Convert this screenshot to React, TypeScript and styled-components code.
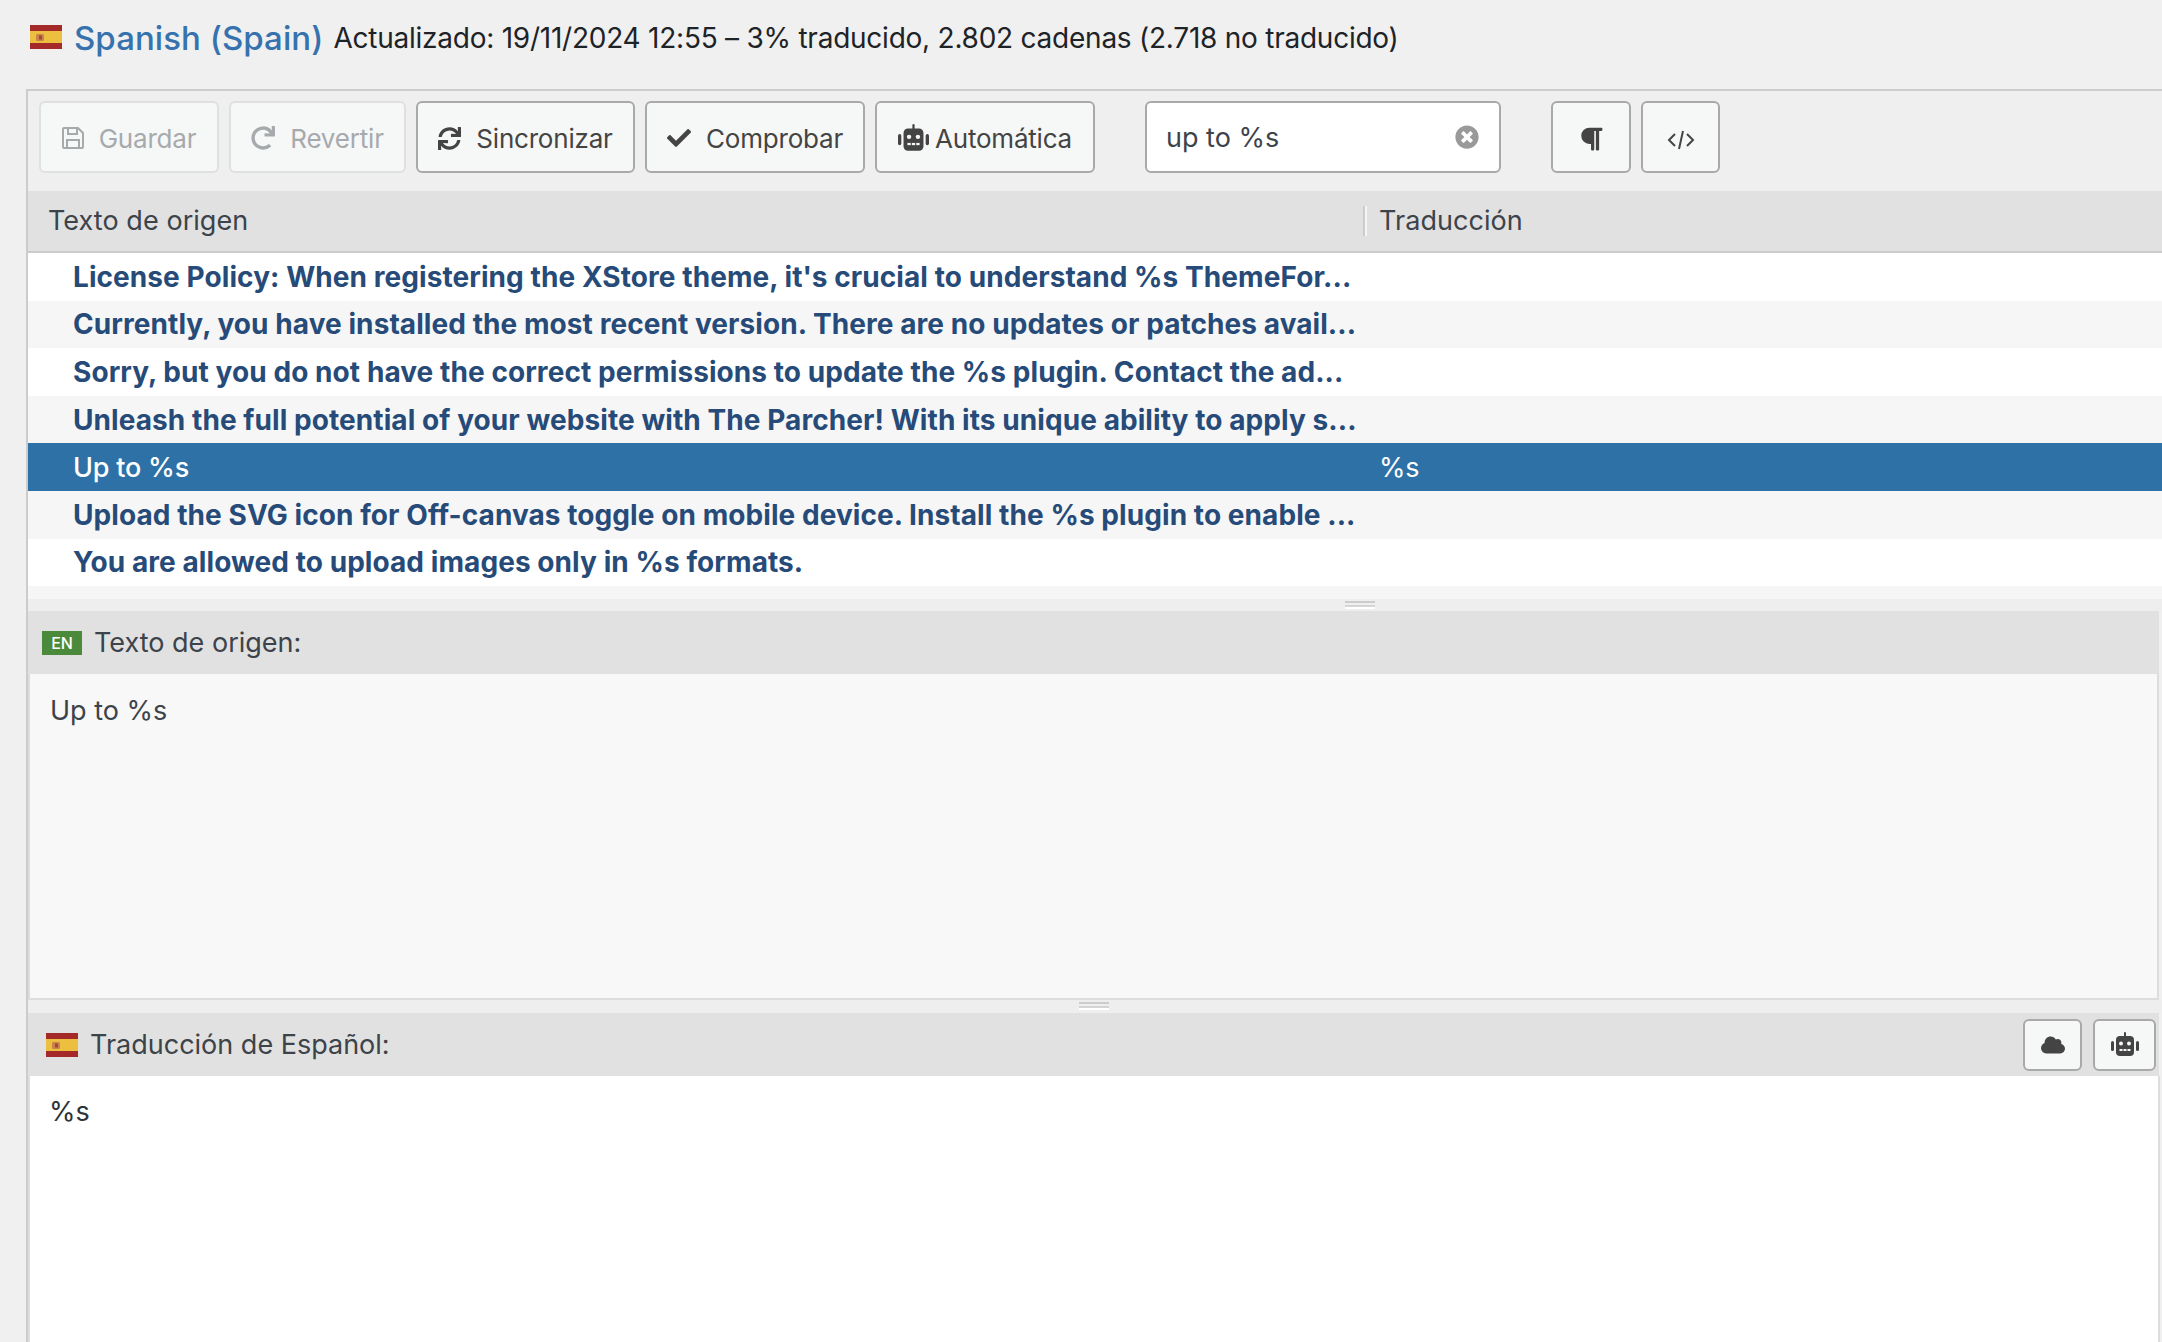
import { ReactNode } from 'react';
import styled, { createGlobalStyle } from 'styled-components';
import { FaCheck, FaCloud, FaParagraph, FaRedo, FaSync, FaTimesCircle } from 'react-icons/fa';

const GlobalStyle = createGlobalStyle`
  html, body {
    margin: 0;
    padding: 0;
    background: #f0f0f0;
  }
  body {
    font-family: Inter, "Noto Sans", "Liberation Sans", sans-serif;
    color: #3c434a;
    overflow: hidden;
  }
`;

const Page = styled.div`
  width: 2162px;
  height: 1342px;
  overflow: hidden;
  display: flex;
  flex-direction: column;
`;

const TitleBar = styled.div`
  height: 89px;
  flex: none;
  box-sizing: border-box;
  padding: 17px 0 0 30px;
  display: flex;
  align-items: flex-start;
`;

const TitleFlag = styled.span`
  margin-top: 8px;
  display: flex;
`;

const Locale = styled.span`
  margin-left: 12px;
  font-size: 33px;
  line-height: 42px;
  font-weight: 500;
  color: #3672ae;
  letter-spacing: 0.05px;
`;

const Stats = styled.span`
  margin-left: 10px;
  font-size: 28px;
  line-height: 42px;
  color: #1d2327;
  letter-spacing: -0.24px;
`;

const Panel = styled.div`
  margin-left: 26px;
  flex: 1;
  min-height: 0;
  border-top: 2px solid #ccc;
  border-left: 2px solid #ccc;
  display: flex;
  flex-direction: column;
`;

const Toolbar = styled.div`
  height: 100px;
  flex: none;
  box-sizing: border-box;
  padding: 10px 0 0 11px;
  display: flex;
  align-items: flex-start;
  gap: 10px;
  background: #efefef;
`;

const Button = styled.div<{ $width: number; $disabled?: boolean; $gap?: number; $drop?: number }>`
  width: ${({ $width }) => $width}px;
  height: 72px;
  flex: none;
  box-sizing: border-box;
  border: 2px solid ${({ $disabled }) => ($disabled ? '#dfe0e0' : '#a9a9a9')};
  border-radius: 6px;
  background: #f6f7f7;
  color: ${({ $disabled }) => ($disabled ? '#a7aaad' : '#444')};
  padding-top: ${({ $drop }) => $drop ?? 2}px;
  display: flex;
  align-items: center;
  justify-content: center;
  gap: ${({ $gap }) => $gap ?? 15}px;
  font-size: 26px;
  letter-spacing: -0.2px;
`;

const SearchBox = styled.div`
  width: 356px;
  height: 72px;
  margin-left: 40px;
  margin-right: 40px;
  flex: none;
  box-sizing: border-box;
  border: 2px solid #a9a9a9;
  border-radius: 6px;
  background: #fff;
  padding: 0 20px 0 19px;
  display: flex;
  align-items: center;
  justify-content: space-between;
  font-size: 27px;
  letter-spacing: 0;
  color: #3c434a;
  svg {
    color: #999;
  }
`;

const ColumnHead = styled.div`
  height: 62px;
  flex: none;
  box-sizing: border-box;
  background: #e1e1e1;
  border-bottom: 2px solid #ccc;
  padding-bottom: 1px;
  display: flex;
  align-items: center;
  font-size: 27px;
  letter-spacing: 0.05px;
  color: #3c434a;
`;

const SourceHead = styled.div`
  width: 1335px;
  flex: none;
  box-sizing: border-box;
  padding-left: 20px;
`;

const ColumnRule = styled.div`
  width: 4px;
  height: 30px;
  flex: none;
  border-left: 2px solid #ccc;
  background: #f5f5f5;
  box-sizing: border-box;
`;

const TargetHead = styled.div`
  margin-left: 12px;
`;

const List = styled.div`
  height: 346px;
  flex: none;
  overflow: hidden;
  background: #fff;
`;

const Row = styled.div<{ $selected?: boolean; $odd?: boolean }>`
  height: 47.6px;
  display: flex;
  align-items: center;
  font-size: ${({ $selected }) => ($selected ? 27 : 28)}px;
  letter-spacing: ${({ $selected }) => ($selected ? -0.2 : 0.07)}px;
  white-space: nowrap;
  background: ${({ $selected, $odd }) => ($selected ? '#2e71a6' : $odd ? '#f6f6f6' : '#fff')};
  color: ${({ $selected }) => ($selected ? '#fff' : '#274b79')};
  font-weight: ${({ $selected }) => ($selected ? 500 : 650)};
`;

const SourceCell = styled.div`
  width: 1351px;
  flex: none;
  box-sizing: border-box;
  padding-left: 45px;
  overflow: hidden;
`;

const TargetCell = styled.div`
  font-weight: 400;
`;

const Splitter = styled.div<{ $height: number; $handleLeft: number }>`
  height: ${({ $height }) => $height}px;
  flex: none;
  background: #eee;
  box-sizing: border-box;
  padding: 2px 0 0 ${({ $handleLeft }) => $handleLeft}px;
`;

const Handle = styled.div`
  width: 30px;
  height: 6px;
  box-sizing: border-box;
  border-top: 2px solid #ccc;
  border-bottom: 2px solid #d4d4d4;
  box-shadow: 0 2px 0 #fff;
`;

const PaneHead = styled.div`
  width: 2131px;
  height: 63px;
  flex: none;
  box-sizing: border-box;
  background: #e1e1e1;
  display: flex;
  align-items: center;
  font-size: 27px;
  letter-spacing: 0;
  color: #3c434a;
`;

const SourceLabel = styled.span`
  margin-left: 14px;
  display: flex;
  align-items: center;
  gap: 12px;
`;

const LangBadge = styled.span`
  width: 40px;
  height: 24px;
  background: #4a8a3a;
  color: #fff;
  font-size: 16px;
  font-weight: 500;
  display: flex;
  align-items: center;
  justify-content: center;
`;

const TargetLabel = styled.span`
  margin-left: 18px;
  display: flex;
  align-items: center;
  gap: 12px;
`;

const PaneTools = styled.div`
  margin-left: auto;
  margin-right: 3px;
  display: flex;
  gap: 11px;
`;

const SmallButton = styled.div<{ $width: number }>`
  width: ${({ $width }) => $width}px;
  height: 52px;
  box-sizing: border-box;
  border: 2px solid #a9a9a9;
  border-radius: 6px;
  background: #f6f7f7;
  color: #444;
  display: flex;
  align-items: center;
  justify-content: center;
`;

const SourceText = styled.div`
  width: 2131px;
  height: 326px;
  flex: none;
  box-sizing: border-box;
  background: #f8f8f8;
  border: 2px solid #ddd;
  border-top: 0;
  padding: 20px 20px;
  font-size: 27px;
  line-height: 34px;
  color: #3c434a;
`;

const TargetText = styled.div`
  width: 2132px;
  flex: 1;
  box-sizing: border-box;
  background: #fff;
  border: 2px solid #ddd;
  border-top: 0;
  border-bottom: 0;
  padding: 19px 19px;
  font-size: 27px;
  line-height: 34px;
  color: #2c3338;
`;

const SpainFlag = () => (
  <svg width="32" height="24" viewBox="0 0 32 24">
    <rect width="32" height="24" fill="#a32a28" />
    <rect y="6" width="32" height="12" fill="#edbf3e" />
    <rect x="6" y="9" width="8" height="7" rx="1.5" fill="#c9824a" />
    <rect x="9" y="10.5" width="3" height="4" fill="#a84440" />
  </svg>
);

const SaveIcon = () => (
  <svg width="22" height="22" viewBox="0 0 22 22" fill="none" stroke="currentColor" strokeWidth="2">
    <path d="M1 2a1 1 0 0 1 1-1h14l5 5v14a1 1 0 0 1-1 1H2a1 1 0 0 1-1-1z" />
    <path d="M6 1v6h9V1M5 21v-8h12v8" />
  </svg>
);

const Robot = ({ size }: { size: number }) => (
  <svg width={size} height={size} viewBox="0 0 28 28" fill="currentColor">
    <rect x="13" y="1" width="2" height="5" rx="1" />
    <rect x="5" y="5" width="18" height="20" rx="4" />
    <rect x="0" y="10" width="3" height="10" rx="1.5" />
    <rect x="25" y="10" width="3" height="10" rx="1.5" />
    <circle cx="10" cy="12.5" r="2" fill="#f6f7f7" />
    <circle cx="18" cy="12.5" r="2" fill="#f6f7f7" />
    <rect x="8.5" y="18" width="3" height="2" fill="#f6f7f7" />
    <rect x="12.5" y="18" width="3" height="2" fill="#f6f7f7" />
    <rect x="16.5" y="18" width="3" height="2" fill="#f6f7f7" />
  </svg>
);

const CodeIcon = () => (
  <svg width="28" height="22" viewBox="0 0 28 22" fill="none" stroke="currentColor" strokeWidth="2">
    <path d="M8 5 2 11l6 6M20 5l6 6-6 6M16 2l-4 18" />
  </svg>
);

const rows: { source: string; target?: string }[] = [
  { source: "License Policy: When registering the XStore theme, it's crucial to understand %s ThemeFor..." },
  { source: 'Currently, you have installed the most recent version. There are no updates or patches avail...' },
  { source: 'Sorry, but you do not have the correct permissions to update the %s plugin. Contact the ad...' },
  { source: 'Unleash the full potential of your website with The Parcher! With its unique ability to apply s...' },
  { source: 'Up to %s', target: '%s' },
  { source: 'Upload the SVG icon for Off-canvas toggle on mobile device. Install the %s plugin to enable ...' },
  { source: 'You are allowed to upload images only in %s formats.' },
  { source: '' },
];

const actions: { label: string; width: number; icon: ReactNode; disabled?: boolean; gap?: number }[] = [
  { label: 'Guardar', width: 180, icon: <SaveIcon />, disabled: true },
  { label: 'Revertir', width: 177, icon: <FaRedo size={24} />, disabled: true },
  { label: 'Sincronizar', width: 219, icon: <FaSync size={23} /> },
  { label: 'Comprobar', width: 220, icon: <FaCheck size={24} /> },
  { label: 'Automática', width: 220, icon: <Robot size={31} />, gap: 6 },
];

export default function App() {
  return (
    <Page>
      <GlobalStyle />
      <TitleBar>
        <TitleFlag>
          <SpainFlag />
        </TitleFlag>
        <Locale>Spanish (Spain)</Locale>
        <Stats>Actualizado: 19/11/2024 12:55 – 3% traducido, 2.802 cadenas (2.718 no traducido)</Stats>
      </TitleBar>
      <Panel>
        <Toolbar>
          {actions.map((action) => (
            <Button key={action.label} $width={action.width} $disabled={action.disabled} $gap={action.gap}>
              {action.icon}
              {action.label}
            </Button>
          ))}
          <SearchBox>
            up to %s
            <FaTimesCircle size={24} />
          </SearchBox>
          <Button $width={80} $drop={4}>
            <FaParagraph size={26} />
          </Button>
          <Button $width={79} $drop={5}>
            <CodeIcon />
          </Button>
        </Toolbar>
        <ColumnHead>
          <SourceHead>Texto de origen</SourceHead>
          <ColumnRule />
          <TargetHead>Traducción</TargetHead>
        </ColumnHead>
        <List>
          {rows.map((row, index) => (
            <Row key={index} $odd={index % 2 === 1} $selected={index === 4}>
              <SourceCell>{row.source}</SourceCell>
              <TargetCell>{row.target}</TargetCell>
            </Row>
          ))}
        </List>
        <Splitter $height={12} $handleLeft={1317}>
          <Handle />
        </Splitter>
        <PaneHead>
          <SourceLabel>
            <LangBadge>EN</LangBadge>
            Texto de origen:
          </SourceLabel>
        </PaneHead>
        <SourceText>Up to %s</SourceText>
        <Splitter $height={13} $handleLeft={1051}>
          <Handle />
        </Splitter>
        <PaneHead>
          <TargetLabel>
            <SpainFlag />
            Traducción de Español:
          </TargetLabel>
          <PaneTools>
            <SmallButton $width={59}>
              <FaCloud size={24} />
            </SmallButton>
            <SmallButton $width={63}>
              <Robot size={28} />
            </SmallButton>
          </PaneTools>
        </PaneHead>
        <TargetText>%s</TargetText>
      </Panel>
    </Page>
  );
}
